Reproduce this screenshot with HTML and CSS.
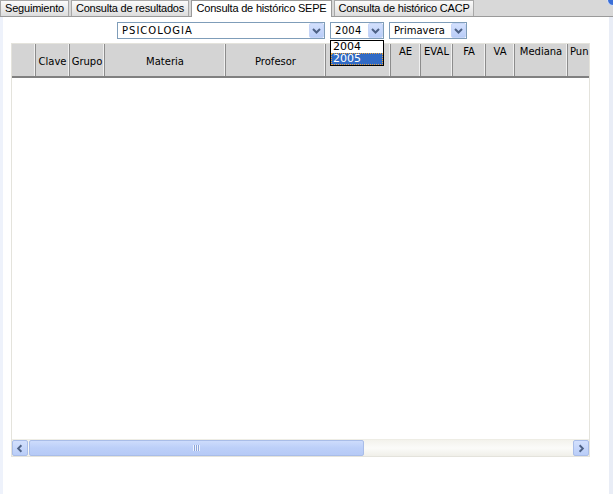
FILE: index.html
```html
<!DOCTYPE html>
<html>
<head>
<meta charset="utf-8">
<link rel="stylesheet" href="styles.css">
</head>
<body>
<div class="tabbar">
  <div class="tab t1">Seguimiento</div>
  <div class="tab t2">Consulta de resultados</div>
  <div class="tab active t3">Consulta de histórico SEPE</div>
  <div class="tab t4">Consulta de histórico CACP</div>
  <span class="corner"></span>
</div>
<div class="panel">
  <div class="filters">
    <div class="select s1">
      <span class="val caps">PSICOLOGIA</span>
      <span class="btn"><svg width="15" height="15" viewBox="0 0 15 15"><path d="M4 6 L7.5 9.5 L11 6" fill="none" stroke="#4d6185" stroke-width="2"/></svg></span>
    </div>
    <div class="select s2">
      <span class="val">2004</span>
      <span class="btn"><svg width="15" height="15" viewBox="0 0 15 15"><path d="M4 6 L7.5 9.5 L11 6" fill="none" stroke="#4d6185" stroke-width="2"/></svg></span>
      <ul class="list">
        <li>2004</li>
        <li class="sel">2005</li>
      </ul>
    </div>
    <div class="select s3">
      <span class="val">Primavera</span>
      <span class="btn"><svg width="15" height="15" viewBox="0 0 15 15"><path d="M4 6 L7.5 9.5 L11 6" fill="none" stroke="#4d6185" stroke-width="2"/></svg></span>
    </div>
  </div>
  <div class="grid">
    <div class="head">
      <div class="hc c0"></div>
      <div class="hc c1 mid">Clave</div>
      <div class="hc c2 mid">Grupo</div>
      <div class="hc c3 mid">Materia</div>
      <div class="hc c4 mid">Profesor</div>
      <div class="hc c5"></div>
      <div class="hc c6">AE</div>
      <div class="hc c7">EVAL</div>
      <div class="hc c8">FA</div>
      <div class="hc c9">VA</div>
      <div class="hc c10">Mediana</div>
      <div class="hc c11 left">Pun</div>
    </div>
    <div class="body"></div>
    <div class="hscroll">
      <span class="sbtn"><svg width="15" height="15" viewBox="0 0 15 15"><path d="M9 4 L5.5 7.5 L9 11" fill="none" stroke="#4d6185" stroke-width="2"/></svg></span>
      <span class="thumb"><span class="grip"></span></span>
      <span class="track"></span>
      <span class="sbtn"><svg width="15" height="15" viewBox="0 0 15 15"><path d="M6 4 L9.5 7.5 L6 11" fill="none" stroke="#4d6185" stroke-width="2"/></svg></span>
    </div>
  </div>
</div>
</body>
</html>
```

FILE: styles.css
```css
* { box-sizing: border-box; }
html, body { margin: 0; padding: 0; background: #fff; }
body { width: 613px; height: 495px; overflow: hidden; font-family: "DejaVu Sans", Verdana, sans-serif; font-size: 10px; color: #000; }

.tabbar {
  position: relative;
  height: 17px;
  background: #d8d8d8;
  border-bottom: 1px solid #9a9a9a;
  display: flex;
  gap: 2px;
  align-items: flex-end;
}
.tab {
  height: 16px;
  font-family: "Liberation Sans", Arial, sans-serif;
  font-size: 11px;
  line-height: 15px;
  text-align: center;
  white-space: nowrap;
  background: linear-gradient(#fbfbfb, #e6e6e6 70%, #dcdcdc);
  border: 1px solid #a8a8a8;
  border-bottom: none;
  letter-spacing: -0.2px;
  color: #000;
}
.t1 { width: 69px; }
.t2 { width: 118px; }
.t3 { width: 141px; }
.t4 { width: 140px; }
.tab.active {
  background: #fff;
  height: 17px;
  margin-bottom: -1px;
  border-color: #9a9a9a;
}
.corner {
  position: absolute;
  right: -6px;
  top: -6px;
  width: 12px;
  height: 12px;
  border-radius: 50%;
  background: #3a6fd8;
  border: 1px solid #dde6fa;
}

.panel {
  height: 477px;
  border-left: 3px solid #eef2fb;
  border-right: 4px solid #e9edf6;
  background: #fff;
  padding-top: 5px;
}

.filters {
  display: flex;
  gap: 5px;
  padding-left: 114px;
  height: 17px;
}
.select {
  position: relative;
  height: 17px;
  border: 1px solid #7f9db9;
  background: #fff;
  display: flex;
  align-items: center;
  justify-content: space-between;
  padding-left: 4px;
}
.s1 { width: 208px; }
.s2 { width: 54px; }
.s3 { width: 78px; }
.val { line-height: 15px; white-space: nowrap; }
.caps { letter-spacing: 1px; }
.s2 .val { letter-spacing: 0.3px; }
.btn {
  width: 15px;
  height: 15px;
  border-radius: 2px;
  background: linear-gradient(#d3e0fd, #b9cdf8);
  border: 1px solid #c6d5f7;
  display: flex;
}
.btn svg { margin: -1px; }

.list {
  position: absolute;
  left: -1px;
  top: 17px;
  width: 54px;
  margin: 0;
  padding: 0;
  list-style: none;
  border: 1px solid #000;
  background: #fff;
  z-index: 5;
  font-size: 11px;
}
.list li {
  height: 12px;
  line-height: 12px;
  padding-left: 2px;
}
.list li.sel {
  background: #316ac5;
  color: #fff;
  outline: 1px dotted #e8a23c;
  outline-offset: -1px;
}

.grid {
  margin-top: 4px;
  margin-left: 8px;
  width: 579px;
  height: 414px;
  border: 1px solid #e4e3dc;
  display: flex;
  flex-direction: column;
  background: #fff;
}
.head {
  display: flex;
  height: 34px;
  width: 577px;
  overflow: hidden;
  background: #d4d4d4;
  border-bottom: 2px solid #808080;
  flex: none;
}
.hc {
  flex: none;
  border-right: 1px solid #8c8c8c;
  box-shadow: inset -1px 0 0 #f0f0f0;
  text-align: center;
  padding-top: 2px;
  line-height: 12px;
  white-space: nowrap;
}
.hc.mid { padding-top: 12px; }
.hc.left { text-align: left; padding-left: 2px; border-right: none; box-shadow: none; }
.c0 { width: 24px; }
.c1 { width: 34px; }
.c2 { width: 35px; }
.c3 { width: 121px; }
.c4 { width: 100px; }
.c5 { width: 65px; }
.c6 { width: 30px; }
.c7 { width: 32px; }
.c8 { width: 33px; }
.c9 { width: 29px; }
.c10 { width: 53px; }
.c11 { width: 21px; }

.body { flex: 1; }

.hscroll {
  flex: none;
  height: 17px;
  display: flex;
  background: linear-gradient(#f3f2ec, #fbfbf9 50%, #f0efe9);
  border-top: 1px solid #eeede5;
}
.sbtn {
  width: 16px;
  height: 16px;
  border-radius: 2px;
  background: linear-gradient(#d3e0fd, #b9cdf8);
  border: 1px solid #a9bde8;
  display: flex;
  align-items: center;
  justify-content: center;
  flex: none;
}
.thumb {
  width: 335px;
  margin-left: 1px;
  height: 16px;
  border-radius: 2px;
  background: linear-gradient(#cddcfc, #bccff9 50%, #b6caf6);
  border: 1px solid #a9bde8;
  display: flex;
  align-items: center;
  justify-content: center;
  flex: none;
}
.grip {
  width: 7px;
  height: 6px;
  background: repeating-linear-gradient(90deg, #eef3fe 0 1px, #8ea6da 1px 2px);
}
.track { flex: 1; }
```
